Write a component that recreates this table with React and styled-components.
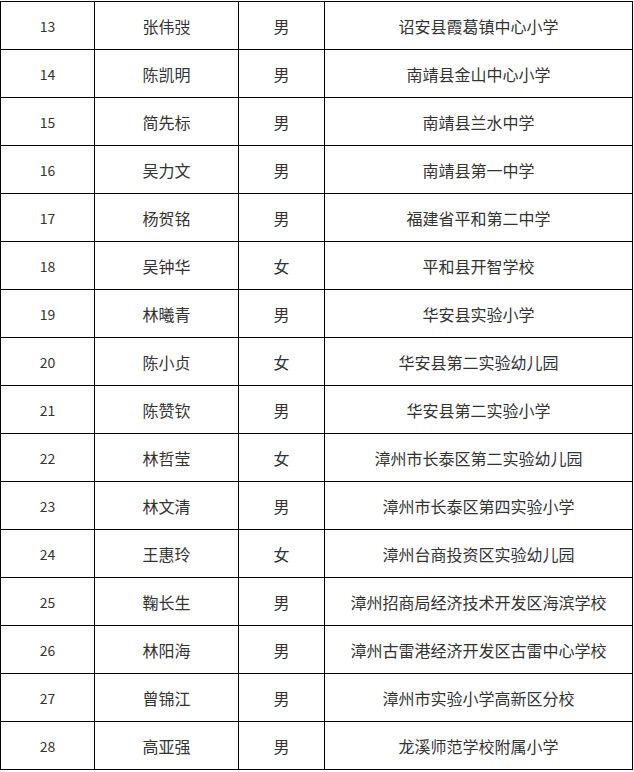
import React from 'react';
import styled, { createGlobalStyle } from 'styled-components';

const GlobalStyle = createGlobalStyle`
  html, body {
    margin: 0;
    padding: 0;
    background: #fff;
  }
  body {
    font-family: "Noto Sans CJK SC", "Noto Sans", sans-serif;
    color: #333;
  }
`;

const Page = styled.div`
  padding-top: 1px;
`;

const Table = styled.table`
  border-collapse: collapse;
  table-layout: fixed;
  width: 633px;
`;

const Col = styled.col`
  width: ${(p) => p.$w}px;
`;

const Row = styled.tr`
  height: 48px;
`;

const Cell = styled.td`
  border: 1px solid #000;
  padding: 0;
  text-align: center;
  vertical-align: middle;
  font-size: ${(p) => (p.$num ? '14px' : '16px')};
  line-height: 1;
  color: #333;
  white-space: nowrap;
`;

const widths = [94, 144, 86, 308];

const rows = [
  ['13', '张伟弢', '男', '诏安县霞葛镇中心小学'],
  ['14', '陈凯明', '男', '南靖县金山中心小学'],
  ['15', '简先标', '男', '南靖县兰水中学'],
  ['16', '吴力文', '男', '南靖县第一中学'],
  ['17', '杨贺铭', '男', '福建省平和第二中学'],
  ['18', '吴钟华', '女', '平和县开智学校'],
  ['19', '林曦青', '男', '华安县实验小学'],
  ['20', '陈小贞', '女', '华安县第二实验幼儿园'],
  ['21', '陈赞钦', '男', '华安县第二实验小学'],
  ['22', '林哲莹', '女', '漳州市长泰区第二实验幼儿园'],
  ['23', '林文清', '男', '漳州市长泰区第四实验小学'],
  ['24', '王惠玲', '女', '漳州台商投资区实验幼儿园'],
  ['25', '鞠长生', '男', '漳州招商局经济技术开发区海滨学校'],
  ['26', '林阳海', '男', '漳州古雷港经济开发区古雷中心学校'],
  ['27', '曾锦江', '男', '漳州市实验小学高新区分校'],
  ['28', '高亚强', '男', '龙溪师范学校附属小学'],
];

export default function App() {
  return (
    <>
      <GlobalStyle />
      <Page>
        <Table>
          <colgroup>
            {widths.map((w, i) => (
              <Col key={i} $w={w} />
            ))}
          </colgroup>
          <tbody>
            {rows.map((r) => (
              <Row key={r[0]}>
                <Cell $num>{r[0]}</Cell>
                <Cell>{r[1]}</Cell>
                <Cell>{r[2]}</Cell>
                <Cell>{r[3]}</Cell>
              </Row>
            ))}
          </tbody>
        </Table>
      </Page>
    </>
  );
}
